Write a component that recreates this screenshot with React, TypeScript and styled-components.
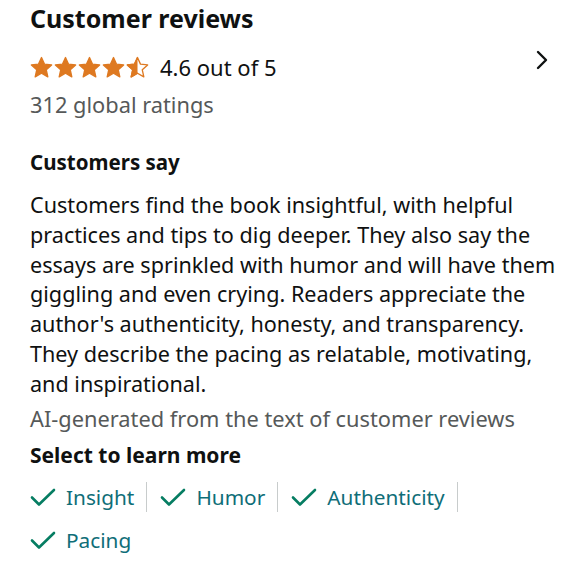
import React from "react";
import styled, { createGlobalStyle } from "styled-components";

const Global = createGlobalStyle`
  html, body { margin: 0; padding: 0; background: #fff; }
  body { font-family: "Noto Sans", "Open Sans", sans-serif; color: #0f1111; }
`;

const Page = styled.div`
  width: 580px;
  height: 580px;
  box-sizing: border-box;
  padding: 1px 18px 0 30px;
  overflow: hidden;
`;

const Title = styled.h2`
  margin: 0;
  font-size: 25px;
  line-height: 34px;
  font-weight: 700;
  color: #0f1111;
`;

const RatingRow = styled.div`
  display: flex;
  align-items: center;
  height: 36px;
  margin-top: 14px;
`;

const Stars = styled.div`
  display: flex;
  gap: 1px;
  margin-right: 11px;
`;

const RatingText = styled.span`
  font-size: 22px;
  color: #0f1111;
`;

const Chevron = styled.div`
  margin-left: auto;
  align-self: flex-start;
  margin-top: 1px;
  display: flex;
  margin-right: 13px;
`;

const Muted = styled.div<{ $mt?: number }>`
  font-size: 21.8px;
  line-height: 30px;
  color: #565959;
  margin-top: ${(p) => p.$mt ?? 0}px;
`;

const SubTitle = styled.h3<{ $mt?: number; $size?: number }>`
  margin: ${(p) => p.$mt ?? 0}px 0 0;
  font-size: ${(p) => p.$size ?? 20.5}px;
  line-height: 30px;
  font-weight: 700;
`;

const Para = styled.p`
  margin: 13px 0 0;
  font-size: 21.6px;
  line-height: 29.8px;
  color: #0f1111;
`;

const Chips = styled.div`
  display: flex;
  flex-wrap: wrap;
  margin-top: 12px;
  row-gap: 13px;
`;

const Chip = styled.div<{ $last?: boolean }>`
  display: flex;
  align-items: center;
  gap: 10px;
  height: 30px;
  padding-right: 12px;
  margin-right: 13px;
  border-right: ${(p) => (p.$last ? "none" : "1px solid #c8cccc")};
  font-size: 20.8px;
  color: #0f6e78;
`;

const STAR = "M12 1.6l3.1 6.9 7.5.8-5.6 5.1 1.6 7.4L12 18l-6.6 3.8 1.6-7.4-5.6-5.1 7.5-.8z";

function Star({ half }: { half?: boolean }) {
  return (
    <svg width="23" height="22" viewBox="0 0 24 23">
      <defs>
        <clipPath id="lefthalf">
          <rect x="0" y="0" width="12" height="24" />
        </clipPath>
      </defs>
      {half ? (
        <>
          <path d={STAR} fill="#fff" stroke="#de7921" strokeWidth="1.4" strokeLinejoin="round" />
          <path d={STAR} fill="#de7921" clipPath="url(#lefthalf)" stroke="#de7921" strokeWidth="1.4" strokeLinejoin="round" />
        </>
      ) : (
        <path d={STAR} fill="#de7921" stroke="#de7921" strokeWidth="1.4" strokeLinejoin="round" />
      )}
    </svg>
  );
}

function Check() {
  return (
    <svg width="26" height="20" viewBox="0 0 26 20">
      <path d="M2 10.5l7 7L24 3" fill="none" stroke="#067d62" strokeWidth="2.6" strokeLinecap="round" strokeLinejoin="round" />
    </svg>
  );
}

const tags = ["Insight", "Humor", "Authenticity", "Pacing"];

export default function App() {
  return (
    <Page>
      <Global />
      <Title>Customer reviews</Title>
      <RatingRow>
        <Stars>
          <Star />
          <Star />
          <Star />
          <Star />
          <Star half />
        </Stars>
        <RatingText>4.6 out of 5</RatingText>
        <Chevron>
          <svg width="14" height="20" viewBox="0 0 14 20">
            <path d="M3 2l8 8-8 8" fill="none" stroke="#0f1111" strokeWidth="2.4" strokeLinecap="round" strokeLinejoin="round" />
          </svg>
        </Chevron>
      </RatingRow>
      <Muted $mt={5}>312 global ratings</Muted>
      <SubTitle $mt={27}>Customers say</SubTitle>
      <Para>
        Customers find the book insightful, with helpful practices and tips to dig deeper. They also say the essays are sprinkled with humor and will have them giggling and even crying. Readers appreciate the author's authenticity, honesty, and transparency. They describe the pacing as relatable, motivating, and inspirational.
      </Para>
      <Muted $mt={5}>AI-generated from the text of customer reviews</Muted>
      <SubTitle $mt={6} $size={21}>Select to learn more</SubTitle>
      <Chips>
        {tags.map((t, i) => (
          <Chip key={t} $last={i === tags.length - 1}>
            <Check />
            {t}
          </Chip>
        ))}
      </Chips>
    </Page>
  );
}
